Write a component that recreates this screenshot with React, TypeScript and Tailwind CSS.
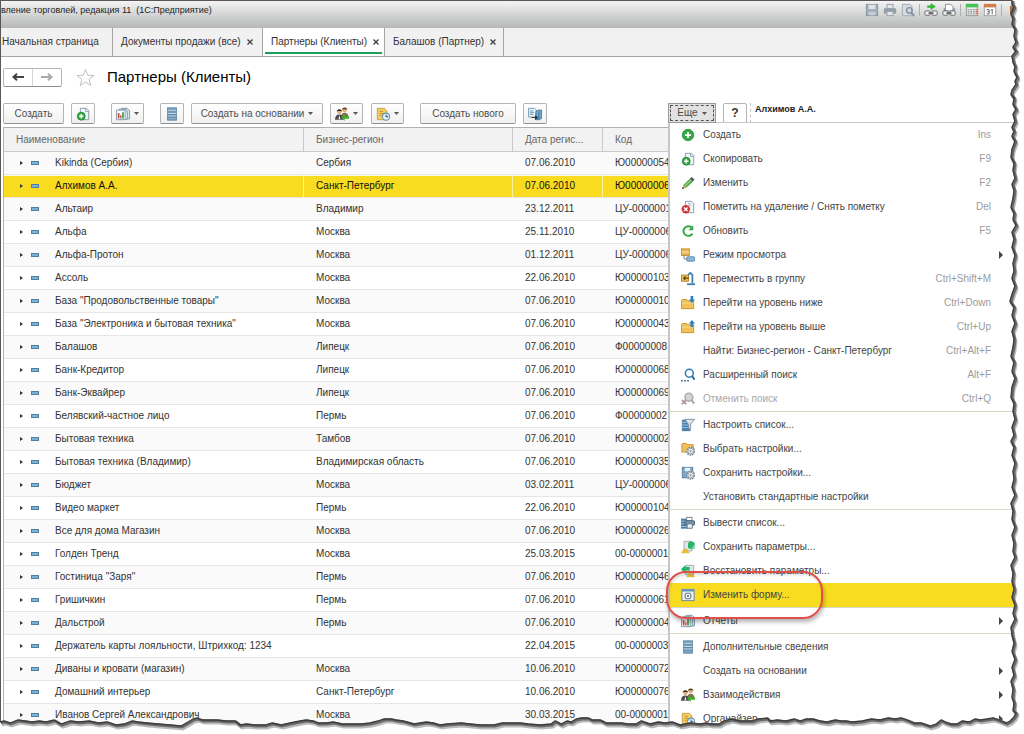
import type { ReactNode } from "react";
import clsx from "clsx";

type IconName =
  | "plus"
  | "copy"
  | "pencil"
  | "docDelete"
  | "refresh"
  | "viewMode"
  | "moveGroup"
  | "levelDown"
  | "levelUp"
  | "search"
  | "searchOff"
  | "filterList"
  | "folderGear"
  | "saveGear"
  | "printList"
  | "paramSave"
  | "paramLoad"
  | "form"
  | "report"
  | "list"
  | "people"
  | "organizer"
  | "transfer"
  | "save"
  | "print"
  | "preview"
  | "linkAdd"
  | "linkPrint"
  | "calc"
  | "calendar";

const page = (
  <path d="M5 1.500h7l2.500 2.500v10.500H5z" fill="#f4f8fb" stroke="#7c93a5" />
);
const gear = (
  <>
    <circle cx="11" cy="10.500" r="4.500" fill="#e6e9ec" stroke="#7d8790" strokeWidth="1.500" strokeDasharray="2 1" />
    <circle cx="11" cy="10.500" r="3.200" fill="#f4f5f6" stroke="#7d8790" />
    <circle cx="11" cy="10.500" r="1.200" fill="#8a949d" />
  </>
);
const folder = (
  <>
    <path d="M.5 14.500v-9l1-1.500h5l1 1.500h7v9z" fill="#f0c255" stroke="#c08f33" />
    <path d="M1 8h13" stroke="#fbe3a0" />
  </>
);
const greenPlus = (
  <>
    <circle cx="6" cy="10.500" r="4.500" fill="#37a645" stroke="#1d8a30" />
    <path d="M6 8v5M3.500 10.500h5" stroke="#fff" strokeWidth="1.600" />
  </>
);
const links = (
  <>
    <rect x="1" y="9" width="6" height="5" rx="1" fill="#eee" stroke="#666" />
    <rect x="9" y="9" width="6" height="5" rx="1" fill="#eee" stroke="#666" />
    <path d="M5 11.500h6" stroke="#555" strokeWidth="1.500" />
  </>
);

const icons: Record<IconName, ReactNode> = {
  plus: (
    <>
      <circle cx="8" cy="8" r="6.500" fill="#35a745" stroke="#23923a" />
      <path d="M8 4.500v7M4.500 8h7" stroke="#fff" strokeWidth="2" />
    </>
  ),
  copy: (
    <>
      {page}
      <path d="M11 2v3h3" fill="none" stroke="#7c93a5" />
      {greenPlus}
    </>
  ),
  pencil: (
    <>
      <path d="M1.500 14.500l1.500-4.500 7-7 3.500 3.500-7.500 7z" fill="#55a84a" />
      <path d="M4.500 11.500l7-7" stroke="#8fd07c" strokeWidth="1.500" />
      <path d="M10 3l2-2 3.500 3-2 2.500z" fill="#4d5c68" />
      <path d="M1.500 14.500l1.500-4.500 3 3.500z" fill="#e8a15a" />
      <path d="M1 15l1-2.500 1.500 1.500z" fill="#333" />
    </>
  ),
  docDelete: (
    <>
      {page}
      <path d="M8 4h3M8 6h4" stroke="#9fb0bd" />
      <circle cx="5.500" cy="10.500" r="4.800" fill="#d3333b" />
      <path d="M3.500 8.500l4 4M7.500 8.500l-4 4" stroke="#fff" strokeWidth="1.600" />
    </>
  ),
  refresh: (
    <>
      <path d="M13 11A5.500 5.500 0 1 1 12 4" fill="none" stroke="#33a845" strokeWidth="2.200" />
      <path d="M14 1.500v5.500H8.500z" fill="#33a845" />
    </>
  ),
  viewMode: (
    <>
      <rect x=".5" y="1" width="9" height="7.500" fill="#e7b553" stroke="#c1882f" />
      <path d="M1 4.500h8" stroke="#fff0bd" />
      <path d="M3.500 8.500v4H7" fill="none" stroke="#777" />
      <rect x="6.500" y="10" width="9" height="5" rx="1" fill="#8db5d5" stroke="#5688b0" />
    </>
  ),
  moveGroup: (
    <>
      <rect x=".5" y="3.500" width="8" height="7" fill="#f0c255" stroke="#b67e26" />
      <path d="M3 7h6M5 5L3 7l2 2" fill="none" stroke="#5d4314" strokeWidth="1.300" />
      <path d="M8 3.500l2.500-2.500L13 3v10" fill="none" stroke="#3f7da8" strokeWidth="2" />
      <path d="M7 14h9" stroke="#3f7da8" strokeWidth="2" />
    </>
  ),
  levelDown: (
    <>
      {folder}
      <path d="M11 0h3v4h2l-3.500 4L9 4h2z" fill="#2b80bd" />
    </>
  ),
  levelUp: (
    <>
      {folder}
      <path d="M11 8h3V4h2l-3.500-4L9 4h2z" fill="#2b80bd" />
    </>
  ),
  search: (
    <>
      <circle cx="9.500" cy="6" r="4.500" fill="#fff" stroke="#2d7db0" strokeWidth="1.800" />
      <path d="M12.500 9l3 4.500" stroke="#2d6c98" strokeWidth="2.200" />
      <path d="M0 14.500h2M3.500 14.500h2M7 14.500h2" stroke="#2d6c98" strokeWidth="1.800" />
    </>
  ),
  searchOff: (
    <>
      <circle cx="9" cy="6" r="4.500" fill="#d5d5d5" stroke="#ababab" strokeWidth="1.800" />
      <path d="M12 9l3 4.500" stroke="#a5a5a5" strokeWidth="2.200" />
      <path d="M1 9l5 5M6 9l-5 5" stroke="#b58f8f" strokeWidth="2" />
    </>
  ),
  filterList: (
    <>
      <rect x="1" y="2" width="10" height="13" fill="#4a82ae" />
      <path d="M1 5h9M1 8h10M1 11h10" stroke="#a5c9e3" />
      <path d="M4.500 1.500h11L11 7v4l-2.500 1.500V7z" fill="#dfe5ea" stroke="#7a8b99" />
    </>
  ),
  folderGear: (
    <>
      <path d="M1 11.500v-9l1-1h4l1 1.500h7v8.500z" fill="#f0c255" stroke="#c08f33" />
      {gear}
    </>
  ),
  saveGear: (
    <>
      <rect x="1.500" y="1.500" width="12" height="12" fill="#7fa8ca" stroke="#54789a" />
      <rect x="4.500" y="2" width="6" height="4" fill="#e6f0f8" />
      {gear}
    </>
  ),
  printList: (
    <>
      <rect x="0" y="3" width="8" height="11.500" fill="#4a82ae" />
      <path d="M0 6h7M0 9h7M0 12h7" stroke="#a5c9e3" />
      <rect x="6.500" y="1.500" width="6" height="4" fill="#fff" stroke="#6a7c8a" />
      <rect x="4.500" y="5.500" width="11" height="5" rx="1" fill="#7d95a8" stroke="#3e566b" />
      <path d="M7 9h6v5H7z" fill="#e8f1f8" stroke="#54708a" />
    </>
  ),
  paramSave: (
    <>
      <path d="M3.500 1.500h9v11h-9z" fill="#dfe5ea" stroke="#98a5af" />
      <path d="M8 9V5c0-3 2-4 5-3l2.500 1v7H11z" fill="#24b566" />
      <path d="M12 9l3-3v4z" fill="#8be3b0" />
      <path d="M0 15l3-5h4l3 5z" fill="#e4bd3e" />
    </>
  ),
  paramLoad: (
    <>
      <path d="M5.500 1.500h9v11h-9z" fill="#dfe5ea" stroke="#98a5af" />
      <path d="M0 6l5-5v2.500h5v4H5V11z" fill="#24b566" />
      <path d="M6 15l3-5h4l3 5z" fill="#e4bd3e" />
    </>
  ),
  form: (
    <>
      <rect x="1" y="1.500" width="14" height="13" fill="#e6edf2" stroke="#5c8099" />
      <path d="M1 3h14" stroke="#5f97bd" strokeWidth="2" />
      <circle cx="8" cy="9" r="3.300" fill="#fff" stroke="#718592" strokeWidth="1.300" />
      <circle cx="8" cy="9" r="1.200" fill="#5c7080" />
    </>
  ),
  report: (
    <>
      <path d="M6.500 1.500h6l3 2.500v9.500h-9z" fill="#dbe7ef" stroke="#7593a8" />
      <path d="M3.500 2.500h7l2.500 2v9.500h-9.500z" fill="#eaf1f6" stroke="#7593a8" />
      <path d="M.5 3.500h10v11H.5z" fill="#f7fafc" stroke="#7593a8" />
      <path d="M3 13V7" stroke="#d3483c" strokeWidth="2" />
      <path d="M5.500 13V9.500" stroke="#d3483c" strokeWidth="1.500" />
      <path d="M8 13V6" stroke="#3fa34d" strokeWidth="2" />
    </>
  ),
  list: (
    <>
      <rect x="3" y="1" width="10" height="14" fill="#80a9c8" stroke="#557d9c" />
      <path d="M3 4.500h10M3 7.500h10M3 10.500h10" stroke="#dbe9f3" />
      <path d="M3 5.500h10M3 8.500h10M3 11.500h10" stroke="#557d9c" />
    </>
  ),
  people: (
    <>
      <circle cx="11" cy="3.500" r="2.600" fill="#e1b07b" />
      <path d="M8 3.500a3 3 0 0 1 6 0l-1-1H9z" fill="#5b3a1f" />
      <path d="M7 12c0-4 2-5.500 4-5.500s4.500 1.500 4.500 5.500z" fill="#8c6b4e" />
      <circle cx="5" cy="5.500" r="2.600" fill="#e1b07b" />
      <path d="M2 5.500a3 3 0 0 1 6 0l-1-1H3z" fill="#3a2a1c" />
      <path d="M0 14.500c0-4 2-6 5-6s4.500 2 4.500 6z" fill="#4b4b4b" />
      <path d="M5 9l-1 5h2z" fill="#fff" />
      <path d="M7 12l4-4v2.500h5v3h-5V16z" fill="#3fae29" />
    </>
  ),
  organizer: (
    <>
      <path d="M1.500 1.500h8l3 3v10h-11z" fill="#f3cf61" stroke="#c49a37" />
      <path d="M4 5h4M4 7.500h6M4 10h3" stroke="#b98b2e" />
      <circle cx="11.500" cy="11" r="4" fill="#e9f3fa" stroke="#6f97b5" strokeWidth="1.200" />
      <path d="M11.500 8.500V11h2.500" fill="none" stroke="#34678e" strokeWidth="1.200" />
    </>
  ),
  transfer: (
    <>
      <path d="M.5 1.500h7l2 2v8h-9z" fill="#eef5fa" stroke="#6c93b0" />
      <path d="M2 4.500h4M2 6.500h5M2 8.500h4" stroke="#5c8bad" />
      <path d="M9 5l3-1.500h3.500V13l-3 1.500H9z" fill="#73a8cd" stroke="#3f7299" />
      <path d="M12.500 5v9" stroke="#3f7299" />
      <path d="M4 11.300h4V9l4 3-4 3v-2.300H4z" fill="#2f3a42" />
    </>
  ),
  save: (
    <>
      <rect x="1.500" y="1.500" width="13" height="13" fill="#a3adb7" stroke="#8995a1" />
      <rect x="4" y="2" width="8" height="5" fill="#dfe3e6" />
      <rect x="4" y="10" width="8" height="4" fill="#c8ced4" />
    </>
  ),
  print: (
    <>
      <rect x="4.500" y="1.500" width="7" height="5" fill="#e3e6e9" stroke="#929da7" />
      <rect x="1" y="6" width="14" height="6" rx="1" fill="#929da7" />
      <rect x="4.500" y="9.500" width="7" height="5" fill="#e3e6e9" stroke="#929da7" />
    </>
  ),
  preview: (
    <>
      <path d="M1.500 1.500h9l2 2v11h-11z" fill="#d8dce0" stroke="#9ca6af" />
      <circle cx="9.500" cy="8.500" r="3.200" fill="#cbd8e2" stroke="#7f909e" strokeWidth="1.500" />
      <path d="M12 11l3 4" stroke="#7f909e" strokeWidth="2" />
    </>
  ),
  linkAdd: (
    <>
      {links}
      <path d="M4 3h4V.5L13 4 8 7.500V5H4z" fill="#2fbf2b" stroke="#1f9a22" strokeWidth=".5" />
    </>
  ),
  linkPrint: (
    <>
      <path d="M4 1.500h6l2.500 2.500v5H4z" fill="#fff" stroke="#7b8792" />
      <path d="M2 6h2v3H2zM13 6h2v3h-2z" fill="#8d98a3" />
      {links}
    </>
  ),
  calc: (
    <>
      <rect x="1.500" y="1.500" width="13" height="13" fill="#eef0ee" stroke="#8a9a8c" />
      <rect x="1" y="1" width="14" height="4" fill="#43c457" />
      <path d="M3 7.500h2M6 7.500h2M9 7.500h2M3 10h2M6 10h2M9 10h2M3 12.500h2M6 12.500h2M9 12.500h2" stroke="#8f969b" strokeWidth="1.500" />
      <path d="M12 7.500h2M12 10h2M12 12.500h2" stroke="#d3604c" strokeWidth="1.500" />
    </>
  ),
  calendar: (
    <>
      <rect x="1.500" y="2.500" width="13" height="12" fill="#fff" stroke="#9a9a9a" />
      <rect x="1" y="1" width="14" height="4" fill="#cf7e48" />
      <path d="M4 7.500h3v5H4M5 10h2M10.500 7v6M9 8.500l1.500-1.500" fill="none" stroke="#555" />
    </>
  ),
};

function Icon({ name, size = 14 }: { name: IconName; size?: number }) {
  return (
    <svg viewBox="0 0 16 16" width={size} height={size} className="shrink-0" aria-hidden="true">
      {icons[name]}
    </svg>
  );
}

function Caret() {
  return (
    <svg viewBox="0 0 5 3" width="5" height="3" className="shrink-0" aria-hidden="true">
      <path d="M0 0h5L2.500 3z" fill="#555" />
    </svg>
  );
}

interface ToolButtonProps {
  label: string;
  text?: string;
  icon?: IconName;
  caret?: boolean;
  className: string;
}

function ToolButton({ label, text, icon, caret, className }: ToolButtonProps) {
  return (
    <button
      type="button"
      aria-label={label}
      className={clsx(
        "flex h-[21px] shrink-0 items-center justify-center rounded-xs border border-[#b5b5b5] border-b-[#8f8f8f] bg-linear-to-b from-white to-[#f0f0f0] whitespace-nowrap",
        caret && "gap-1",
        className,
      )}
    >
      {icon && <Icon name={icon} />}
      {text}
      {caret && <Caret />}
    </button>
  );
}

interface Tab {
  title: string;
  active?: boolean;
  closable?: boolean;
  className: string;
}

const tabs: Tab[] = [
  { title: "Начальная страница", className: "w-[112px] pl-px" },
  { title: "Документы продажи (все)", closable: true, className: "w-[150px] pl-2" },
  { title: "Партнеры (Клиенты)", closable: true, active: true, className: "w-[122px] pl-2" },
  { title: "Балашов (Партнер)", closable: true, className: "w-[119px] pl-2" },
];

interface Partner {
  name: string;
  region: string;
  date: string;
  code: string;
}

const partners: Partner[] = [
  { name: "Kikinda (Сербия)", region: "Сербия", date: "07.06.2010", code: "Ю00000054" },
  { name: "Алхимов А.А.", region: "Санкт-Петербург", date: "07.06.2010", code: "Ю00000006" },
  { name: "Альтаир", region: "Владимир", date: "23.12.2011", code: "ЦУ-0000001" },
  { name: "Альфа", region: "Москва", date: "25.11.2010", code: "ЦУ-0000006" },
  { name: "Альфа-Протон", region: "Москва", date: "01.12.2011", code: "ЦУ-0000006" },
  { name: "Ассоль", region: "Москва", date: "22.06.2010", code: "Ю00000103" },
  { name: 'База "Продовольственные товары"', region: "Москва", date: "07.06.2010", code: "Ю00000010" },
  { name: 'База "Электроника и бытовая техника"', region: "Москва", date: "07.06.2010", code: "Ю00000043" },
  { name: "Балашов", region: "Липецк", date: "07.06.2010", code: "Ф00000008" },
  { name: "Банк-Кредитор", region: "Липецк", date: "07.06.2010", code: "Ю00000068" },
  { name: "Банк-Эквайрер", region: "Липецк", date: "07.06.2010", code: "Ю00000069" },
  { name: "Белявский-частное лицо", region: "Пермь", date: "07.06.2010", code: "Ф00000002" },
  { name: "Бытовая техника", region: "Тамбов", date: "07.06.2010", code: "Ю00000002" },
  { name: "Бытовая техника (Владимир)", region: "Владимирская область", date: "07.06.2010", code: "Ю00000035" },
  { name: "Бюджет", region: "Москва", date: "03.02.2011", code: "ЦУ-0000006" },
  { name: "Видео маркет", region: "Пермь", date: "22.06.2010", code: "Ю00000104" },
  { name: "Все для дома Магазин", region: "Москва", date: "07.06.2010", code: "Ю00000026" },
  { name: "Голден Тренд", region: "Москва", date: "25.03.2015", code: "00-0000001" },
  { name: 'Гостиница "Заря"', region: "Пермь", date: "07.06.2010", code: "Ю00000046" },
  { name: "Гришичкин", region: "Пермь", date: "07.06.2010", code: "Ю00000061" },
  { name: "Дальстрой", region: "Пермь", date: "07.06.2010", code: "Ю00000004" },
  { name: "Держатель карты лояльности, Штрихкод: 1234", region: "", date: "22.04.2015", code: "00-0000003" },
  { name: "Диваны и кровати (магазин)", region: "Москва", date: "10.06.2010", code: "Ю00000072" },
  { name: "Домашний интерьер", region: "Санкт-Петербург", date: "10.06.2010", code: "Ю00000076" },
  { name: "Иванов Сергей Александрович", region: "Москва", date: "30.03.2015", code: "00-0000001" },
];

interface Command {
  title: string;
  icon?: IconName;
  keys?: string;
  submenu?: boolean;
  disabled?: boolean;
  highlighted?: boolean;
}

const menu: Command[][] = [
  [
    { title: "Создать", icon: "plus", keys: "Ins" },
    { title: "Скопировать", icon: "copy", keys: "F9" },
    { title: "Изменить", icon: "pencil", keys: "F2" },
    { title: "Пометить на удаление / Снять пометку", icon: "docDelete", keys: "Del" },
    { title: "Обновить", icon: "refresh", keys: "F5" },
    { title: "Режим просмотра", icon: "viewMode", submenu: true },
    { title: "Переместить в группу", icon: "moveGroup", keys: "Ctrl+Shift+M" },
    { title: "Перейти на уровень ниже", icon: "levelDown", keys: "Ctrl+Down" },
    { title: "Перейти на уровень выше", icon: "levelUp", keys: "Ctrl+Up" },
    { title: "Найти: Бизнес-регион - Санкт-Петербург", keys: "Ctrl+Alt+F" },
    { title: "Расширенный поиск", icon: "search", keys: "Alt+F" },
    { title: "Отменить поиск", icon: "searchOff", keys: "Ctrl+Q", disabled: true },
  ],
  [
    { title: "Настроить список...", icon: "filterList" },
    { title: "Выбрать настройки...", icon: "folderGear" },
    { title: "Сохранить настройки...", icon: "saveGear" },
    { title: "Установить стандартные настройки" },
  ],
  [
    { title: "Вывести список...", icon: "printList" },
    { title: "Сохранить параметры...", icon: "paramSave" },
    { title: "Восстановить параметры...", icon: "paramLoad" },
    { title: "Изменить форму...", icon: "form", highlighted: true },
  ],
  [{ title: "Отчеты", icon: "report", submenu: true }],
  [
    { title: "Дополнительные сведения", icon: "list" },
    { title: "Создать на основании", submenu: true },
    { title: "Взаимодействия", icon: "people", submenu: true },
    { title: "Органайзер", icon: "organizer", submenu: true },
  ],
];

function TitleBar() {
  return (
    <header className="flex h-7 items-start justify-between border-t border-[#5a5658] bg-linear-to-b from-[#f4f4f4] via-[#d4d5d5] to-[#b6b7b7] pr-[6px]">
      <span className="pt-[3px] text-[9px] leading-3 whitespace-pre text-[#222]">
        вление торговлей, редакция 11  (1С:Предприятие)
      </span>
      <div className="flex items-center gap-1 pt-[2px]">
        <Icon name="save" />
        <Icon name="print" />
        <Icon name="preview" />
        <span className="h-3 w-px bg-[#b0b0b0]" />
        <Icon name="linkAdd" />
        <Icon name="linkPrint" />
        <span className="h-3 w-px bg-[#b0b0b0]" />
        <Icon name="calc" />
        <Icon name="calendar" />
        <span className="mr-1 h-3 w-px bg-[#b0b0b0]" />
        <span className="h-2 w-2 bg-[#a8693c]" />
      </div>
    </header>
  );
}

function TabBar() {
  return (
    <nav className="flex h-[29px] border-b border-[#a6a6a6] bg-[#f1f1f1]">
      {tabs.map((tab) => (
        <div
          key={tab.title}
          className={clsx("relative flex items-center gap-[6px] border-r border-[#a6a6a6]", tab.className, tab.active && "bg-white")}
        >
          <button type="button" className="whitespace-nowrap">
            {tab.title}
          </button>
          {tab.closable && (
            <button type="button" aria-label="Закрыть">
              <svg viewBox="0 0 6 6" width="6" height="6" aria-hidden="true">
                <path d="M.5 .5l5 5M5.500 .5l-5 5" stroke="#444" strokeWidth="1.400" />
              </svg>
            </button>
          )}
          {tab.active && <span className="absolute inset-x-[2px] bottom-[2px] h-[2px] bg-[#1aa05a]" />}
        </div>
      ))}
    </nav>
  );
}

function NavArrow({ flip, color }: { flip?: boolean; color: string }) {
  return (
    <svg viewBox="0 0 12 8" width="12" height="8" aria-hidden="true">
      <path
        d={flip ? "M0 4h10M7 .8L10.500 4 7 7.200" : "M12 4H2M5 .8L1.500 4 5 7.200"}
        fill="none"
        stroke={color}
        strokeWidth="2"
      />
    </svg>
  );
}

function FormHeader() {
  return (
    <div className="flex h-[46px] items-center pb-[6px] pl-[2px]">
      <div className="flex h-[19px] w-[59px] rounded-xs border border-[#b5b5b5] border-b-[#8f8f8f]">
        <button type="button" aria-label="Назад" className="flex flex-1 items-center justify-center border-r border-[#d5d5d5]">
          <NavArrow color="#444" />
        </button>
        <button type="button" aria-label="Вперед" className="flex flex-1 items-center justify-center">
          <NavArrow flip color="#aaa" />
        </button>
      </div>
      <button type="button" aria-label="В избранное" className="ml-[14px]">
        <svg viewBox="0 0 20 20" width="19" height="19" aria-hidden="true">
          <path
            d="M10 1.500l2.300 6.200 6.700.2-5.300 4.100 1.900 6.500L10 14.700l-5.600 3.800 1.900-6.500L1 7.900l6.700-.2z"
            fill="#fff"
            stroke="#b9bfc5"
          />
        </svg>
      </button>
      <h1 className="ml-3 text-[15px] text-black">Партнеры (Клиенты)</h1>
    </div>
  );
}

function MenuItem({ item }: { item: Command }) {
  return (
    <button
      type="button"
      role="menuitem"
      disabled={item.disabled}
      className={clsx(
        "relative flex h-6 w-full items-center pr-[33px] pl-[11px] text-left",
        item.disabled ? "text-[#a8a8a8]" : "text-[#444]",
        item.highlighted && "bg-[#f9db20]",
      )}
    >
      <span className="w-[22px] shrink-0">{item.icon && <Icon name={item.icon} />}</span>
      <span className="flex-1 whitespace-nowrap">{item.title}</span>
      {item.keys && <span className="text-[#9b9b9b]">{item.keys}</span>}
      {item.submenu && (
        <svg viewBox="0 0 4 8" width="4" height="8" className="absolute right-[21px]" aria-hidden="true">
          <path d="M0 0l4 4-4 4z" fill="#444" />
        </svg>
      )}
      {item.highlighted && (
        <span className="absolute -top-3 -left-1 z-10 h-12 w-[157px] rounded-[20px] border-2 border-[#e04f49] shadow-[1px_3px_4px_rgba(0,0,0,0.3),inset_1px_2px_3px_rgba(0,0,0,0.15)]" />
      )}
    </button>
  );
}

function MoreMenu() {
  return (
    <div
      role="menu"
      className="absolute top-[19px] right-0 left-0 z-10 border-t border-l-2 border-t-[#c9c9c9] border-l-[#c6c6c6] bg-white"
    >
      {menu.map((group, i) => (
        <div key={group[0].title} className={clsx(i > 0 && "border-t border-[#d8d8c8] pt-px")}>
          {group.map((item) => (
            <MenuItem key={item.title} item={item} />
          ))}
        </div>
      ))}
    </div>
  );
}

function Toolbar() {
  return (
    <div className="flex h-6 items-start text-[#4d4d4d]">
      <div className="flex min-w-0 flex-1 pl-[2px]">
        <ToolButton label="Создать" text="Создать" className="w-[61px]" />
        <ToolButton label="Скопировать" icon="copy" className="ml-[7px] w-6" />
        <ToolButton label="Отчеты" icon="report" caret className="ml-4 w-[33px]" />
        <ToolButton label="Дополнительные сведения" icon="list" className="ml-4 w-6" />
        <ToolButton label="Создать на основании" text="Создать на основании" caret className="ml-[7px] w-[132px]" />
        <ToolButton label="Взаимодействия" icon="people" caret className="ml-[7px] w-[33px]" />
        <ToolButton label="Органайзер" icon="organizer" caret className="ml-2 w-[33px]" />
        <ToolButton label="Создать нового" text="Создать нового" className="ml-4 w-[96px]" />
        <ToolButton label="Перенести" icon="transfer" className="ml-[7px] w-6" />
      </div>
      <div className="relative flex w-[356px] shrink-0">
        <button
          type="button"
          aria-haspopup="menu"
          aria-expanded="true"
          className="relative z-20 h-[20px] w-[48px] border border-[#9a9a9a] bg-[#e2e2e2] p-px"
        >
          <span className="flex h-full items-center justify-center gap-1 border border-dashed border-[#555]">
            Еще
            <Caret />
          </span>
        </button>
        <button
          type="button"
          aria-label="Справка"
          className="ml-[7px] h-[20px] w-6 rounded-xs border border-[#b5b5b5] bg-white text-[12px] font-bold text-[#333]"
        >
          ?
        </button>
        <div className="ml-[3px] h-[20px] border-l border-dashed border-[#c4c4c4] pl-1 text-[9px] leading-3 font-bold text-[#222]">
          Алхимов А.А.
        </div>
        <MoreMenu />
      </div>
    </div>
  );
}

function PartnerTable() {
  return (
    <table className="ml-[2px] w-full table-fixed border-separate border-spacing-0 border-t border-l border-[#b0b0b0]">
      <colgroup>
        <col className="w-[300px]" />
        <col className="w-[209px]" />
        <col className="w-[90px]" />
        <col />
      </colgroup>
      <thead>
        <tr className="h-6 bg-[#f2f2f2] text-left text-[#666]">
          {["Наименование", "Бизнес-регион", "Дата регис...", "Код"].map((title) => (
            <th key={title} className="border-r border-b border-[#c9c9c9] py-0 pl-3 font-normal">
              {title}
            </th>
          ))}
        </tr>
      </thead>
      <tbody>
        {partners.map((p, i) => {
          const cell = clsx(
            "h-[23px] overflow-hidden border-b border-b-[#e6e6e6] py-0 pl-3 whitespace-nowrap",
            i === 1 && "border-r border-r-[#fdf2a0] bg-[#f9db20] text-[#111] shadow-[inset_0_1px_0_#fdfbe8]",
            i !== 1 && i % 2 === 0 && "bg-[#fafafa]",
          );
          return (
            <tr key={p.name}>
              <td className={cell}>
                <div className="flex items-center pl-1">
                  <svg viewBox="0 0 3 4" width="3" height="4" aria-hidden="true">
                    <path d="M0 0l3 2-3 2z" fill="#333" />
                  </svg>
                  <svg viewBox="0 0 8 4" width="8" height="4" className="ml-2" aria-hidden="true">
                    <path d="M0 0h8v4H0z" fill="#4c7fa5" />
                    <path d="M1 1h6v2H1z" fill="#82b1d3" />
                  </svg>
                  <span className="ml-4">{p.name}</span>
                </div>
              </td>
              <td className={cell}>{p.region}</td>
              <td className={cell}>{p.date}</td>
              <td className={cell}>{p.code}</td>
            </tr>
          );
        })}
      </tbody>
    </table>
  );
}

// torn paper contour: down the right side, then along the bottom to the left
const tornEdge =
  "1012,0 1012,4 1014,7 1011,14 1013,18 1012,24 1015,29 1014,36 1016,42 1013,47 1016,51 1012,56 1013,62 1015,66 1014,71 1017,77 1015,81 1016,84 1012,90 1011,94 1014,98 1013,104 1016,109 1013,114 1015,121 1012,127 1014,131 1012,136 1015,141 1012,149 1011,157 1014,163 1013,170 1015,178 1012,184 1014,190 1013,198 1011,207 1014,213 1013,219 1016,225 1012,232 1014,239 1012,247 1015,255 1013,263 1014,271 1012,278 1015,286 1012,294 1010,301 1014,307 1012,315 1015,323 1012,331 1014,339 1013,347 1011,356 1014,362 1012,371 1015,378 1012,387 1011,397 1014,403 1013,411 1015,419 1012,427 1014,435 1011,441 1014,447 1012,455 1015,463 1013,471 1014,479 1012,487 1015,495 1011,503 1013,511 1012,519 1015,527 1012,535 1014,543 1013,551 1015,557 1011,565 1013,573 1012,581 1014,589 1012,597 1015,605 1013,613 1015,619 1011,627 1012,635 1014,643 1012,651 1015,659 1012,667 1014,675 1011,681 1013,689 1012,697 1014,703 1013,710 1016,713 1014,717 1010,721 1006,723 999,720 993,718 987,719 980,720 975,719 969,722 962,721 957,724 951,724 945,722 941,720 936,724 930,726 921,723 914,723 907,720 901,718 895,719 888,718 880,720 871,719 862,721 852,722 846,721 841,721 835,720 827,722 820,721 813,719 806,719 800,721 794,719 786,721 777,720 770,721 767,718 758,719 752,721 745,721 740,721 731,719 724,721 719,724 711,724 706,723 700,724 690,723 680,725 672,722 665,723 658,722 650,724 641,721 636,724 628,724 621,723 613,723 606,723 600,720 592,720 588,718 581,718 576,719 571,722 567,721 561,724 555,721 551,724 540,725 528,724 520,723 511,723 502,723 494,725 480,725 470,724 461,723 447,724 440,725 433,723 426,722 414,724 403,721 396,720 391,719 384,719 378,721 370,723 361,724 351,724 342,724 333,722 326,723 318,723 313,721 306,720 300,721 290,723 281,725 272,723 265,725 255,725 246,724 240,725 235,721 226,721 217,720 208,720 202,720 197,718 193,719 188,722 181,726 170,725 158,724 147,723 138,722 132,721 124,724 116,725 107,722 98,723 89,721 79,722 70,721 61,724 54,720 46,722 39,721 32,722 25,721 18,720 10,723 4,721 0,722";

function TornEdge() {
  return (
    <svg
      viewBox="0 0 1024 734"
      preserveAspectRatio="none"
      className="pointer-events-none absolute inset-0 z-30 h-full w-full"
      aria-hidden="true"
    >
      <polygon points={`${tornEdge} 0,734 1024,734 1024,0`} fill="#fff" />
      <polyline points={tornEdge} transform="translate(2 3)" fill="none" stroke="#bbb" strokeWidth="3" />
      <polyline points={tornEdge} transform="translate(1 1)" fill="none" stroke="#6b6b6b" strokeWidth="3" />
      <polyline points={tornEdge} fill="none" stroke="#3c3c3c" strokeWidth="1.300" />
    </svg>
  );
}

export default function App() {
  return (
    <div className="relative h-screen overflow-hidden bg-white font-['Liberation_Sans',Arial,sans-serif] text-[10px] leading-4 text-[#333]">
      <div className="min-h-full border-l border-[#5a5658]">
        <TitleBar />
        <TabBar />
        <FormHeader />
        <Toolbar />
        <PartnerTable />
      </div>
      <TornEdge />
    </div>
  );
}
